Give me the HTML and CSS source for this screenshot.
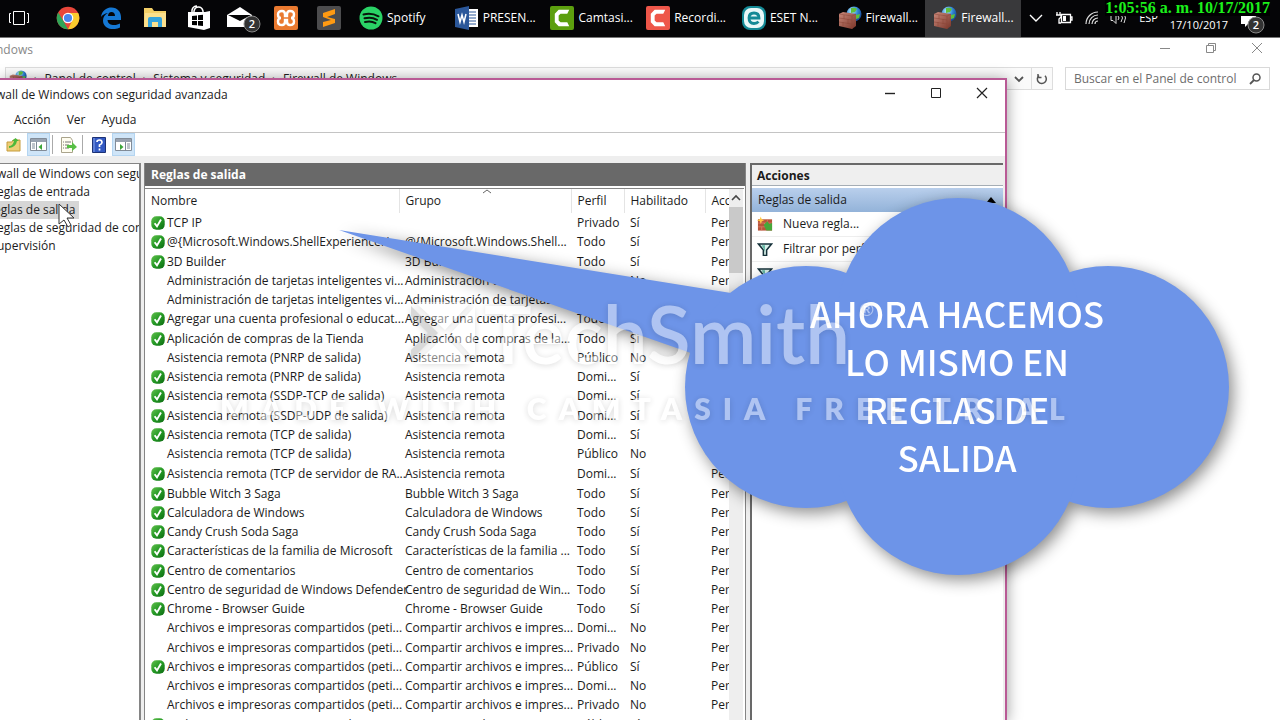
FILE: index.html
```html
<!DOCTYPE html>
<html lang="es">
<head>
<meta charset="utf-8">
<title>Firewall de Windows con seguridad avanzada</title>
<link rel="stylesheet" href="styles.css">
</head>
<body>
<svg class="defs" aria-hidden="true">
  <defs>
    <radialGradient id="globe" cx=".35" cy=".3" r=".8"><stop offset="0" stop-color="#bdf0ff"/><stop offset=".5" stop-color="#2f86d6"/><stop offset="1" stop-color="#123a86"/></radialGradient>
    <linearGradient id="green" x1="0" y1="0" x2="1" y2="1"><stop offset="0" stop-color="#63c04d"/><stop offset=".5" stop-color="#259a25"/><stop offset="1" stop-color="#0c6a12"/></linearGradient>
    <linearGradient id="brick" x1="0" y1="0" x2="1" y2="1"><stop offset="0" stop-color="#c98a7c"/><stop offset="1" stop-color="#7a3428"/></linearGradient>
    <symbol id="ok" viewBox="0 0 14 14"><rect x=".3" y=".3" width="13.4" height="13.4" rx="5" fill="url(#green)"/><path d="M3.6 7.2 6 10.4 10 3.6" fill="none" stroke="#fff" stroke-width="1.9"/></symbol>
    <symbol id="fw" viewBox="0 0 24 24"><circle cx="16" cy="8" r="7.5" fill="url(#globe)"/><path d="M13 2q4-1 6 1l-2 3-4 1zM18 9l4-1-1 4-3 1z" fill="#5fbf3c"/><path d="M1 8l4-2 13 2v12l-4 3-13-3z" fill="url(#brick)"/><path d="M1 8l13 2v13M14 10l4-2M1 12l13 2M1 16l13 2M6 9v4M10 13v5M5 16v5" stroke="#8a4437" stroke-width=".5" fill="none"/></symbol>
    <symbol id="camt" viewBox="0 0 25 25"><rect width="25" height="25" rx="2" fill="currentColor"/><path d="M20 4H9L5 8v9l4 4h11l-2-4h-7l-2-2v-5l2-2h7z" fill="#fff"/></symbol>
    <symbol id="funnel" viewBox="0 0 14 12"><path d="M1 1h12L8.500 6.500v5h-3v-5z" fill="#d8f0ea" stroke="#16323a" stroke-width="1.4"/><path d="M4 2h3v6z" fill="#65b8a5"/></symbol>
  </defs>
</svg>

<div class="desktop">
  <header class="taskbar">
    <button class="taskview" aria-label="Vista de tareas"><svg width="22" height="18" viewBox="0 0 22 18" fill="none" stroke="#fff"><path d="M5.500 2.500h11v13h-11zM3 4.500H1.500v9H3M19 4.500h1.500v9H19"/></svg></button>
    <nav class="pinned">
      <button aria-label="Chrome"><svg width="24" height="24" viewBox="0 0 24 24"><circle cx="12" cy="12" r="11.300" fill="#e8463a"/><path d="M2.200 6.400 8 16l4 7.300A11.300 11.300 0 0 1 2.200 6.400z" fill="#2fa557"/><path d="M12 7h10.200A11.300 11.300 0 0 1 12 23.300L17 13z" fill="#fbcb2d"/><circle cx="12" cy="12" r="5.300" fill="#fff"/><circle cx="12" cy="12" r="4.100" fill="#4a86ee"/></svg></button>
      <button aria-label="Edge"><svg width="22" height="22" viewBox="0 0 22 22"><path d="M1 10C2 3 7 .5 11.500.5c6 0 9.500 4.500 9.500 9.500v3H7.500c.3 4 3.500 5 6.500 5 2.500 0 4.500-.8 6-1.600v4.200c-2 1-4.500 1.500-7 1.500C7 22.100 3 18.500 3 13.500 3 10 5 7.500 8 6 4.500 6.500 2.500 8 1 10zm7-1h7c0-2.500-1.400-4-3.500-4S8.200 6.500 8 9z" fill="#1578d4"/></svg></button>
      <button aria-label="Explorador de archivos"><svg width="24" height="22" viewBox="0 0 24 22"><path d="M1 1h8l2 3h12v16H1z" fill="#f3cf67"/><path d="M2 6h21v14H1z" fill="#fbe08d"/><path d="M5 20v-8q0-2 2-2h10q2 0 2 2v8h-4v-5H9v5z" fill="#35a4dd"/></svg></button>
      <button aria-label="Tienda"><svg width="24" height="26" viewBox="0 0 24 26"><path d="M7 8V6q1-4 4.500-4T16 6v2M5 8V5q1-4 5-4" fill="none" stroke="#fff" stroke-width="1.500"/><path d="M1 7h17l5-1v17l-6 2-16-3z" fill="#fff"/><path d="M5 11l5-.6v4.600H5zm6-.7 5-.5V15h-5zM5 16h5v4.300L5 20zm6 0h5v5l-5-.6z" fill="#000"/></svg></button>
      <button aria-label="Correo, 2 mensajes"><svg width="42" height="30" viewBox="-5 -3 42 30"><path d="M1 9 14 1l12 8v12H1z" fill="#fff"/><path d="M2 9h23l-11 6z" fill="#050505"/><circle cx="26" cy="18" r="8" fill="#333" stroke="#888"/><text x="26" y="22" class="badge">2</text></svg></button>
      <button aria-label="XAMPP"><svg width="24" height="24" viewBox="0 0 24 24"><rect width="24" height="24" rx="2" fill="#ea7a30"/><path d="M8 5Q4 5 4 8.500T7 12q-3 0-3 3.500T8 19q3 0 3-3.500V14h2v1.500q0 3.500 3 3.500 4 0 4-3.500T17 12q3 0 3-3.500T16 5q-3 0-3 3.500V10h-2V8.500Q11 5 8 5z" fill="none" stroke="#fff" stroke-width="2.400"/></svg></button>
      <button aria-label="Sublime Text"><svg width="24" height="24" viewBox="0 0 24 24"><rect width="24" height="24" rx="2" fill="#4c4c4e"/><path d="M6 7l12-4v5l-8 3 8 2v4l-12 4v-5l8-2-8-3z" fill="#ff9a12"/></svg></button>
    </nav>
    <nav class="running">
      <button><svg width="24" height="24" viewBox="0 0 24 24"><circle cx="12" cy="12" r="11.500" fill="#2ad366"/><path d="M4.500 8.500q8-2 15 1.800M5.500 12.300q7-1.800 12.500 1.500M6 16q6-1.500 10.500 1.200" fill="none" stroke="#08150c" stroke-width="2" stroke-linecap="round"/></svg>Spotify</button>
      <button><svg width="24" height="24" viewBox="0 0 24 24"><path d="M11 3h12v18H11z" fill="#fff"/><path d="M14 6h7M14 9h7M14 12h7M14 15h7M14 18h7" stroke="#2b579a"/><path d="M0 3 14 0v24L0 21z" fill="#2b579a"/><path d="M3 8l2 8 2-7 2 7 2-8" fill="none" stroke="#fff" stroke-width="1.500"/></svg>PRESEN...</button>
      <button><svg class="lime" width="24" height="24"><use href="#camt"/></svg>Camtasi...</button>
      <button><svg class="coral" width="24" height="24"><use href="#camt"/></svg>Recordi...</button>
      <button><svg width="24" height="24" viewBox="0 0 24 24"><rect width="24" height="24" rx="8" fill="#148a96"/><rect x="2" y="2" width="20" height="20" rx="7" fill="#e9f8f8"/><path d="M7 12h10q0-5-5-5t-5 5q0 5.500 5 5.500 3 0 4.500-1.800" fill="none" stroke="#148a96" stroke-width="2.800"/></svg>ESET N...</button>
      <button><svg width="24" height="24"><use href="#fw"/></svg>Firewall...</button>
      <button class="active"><svg width="24" height="24"><use href="#fw"/></svg>Firewall...</button>
    </nav>
    <div class="tray">
      <svg width="14" height="8" viewBox="0 0 14 8"><path d="M1 1l6 6 6-6" fill="none" stroke="#fff" stroke-width="1.400"/></svg>
      <svg width="18" height="14" viewBox="0 0 18 14"><path d="M6.500 3.500h9v8h-9zM16 6h1v3h-1M2 1v3M5 1v3M1 4h5v2L4 8v4h2" fill="none" stroke="#fff" stroke-width="1.300"/><path d="M8 5h3v5H8z" fill="#fff"/></svg>
      <svg width="14" height="14" viewBox="0 0 14 14"><path d="M1 13A12 12 0 0 1 13 1M4 13a9 9 0 0 1 9-9M7 13a6 6 0 0 1 6-6M10 13a3 3 0 0 1 3-3" fill="none" stroke="#ddd" stroke-width="1.200"/></svg>
      <svg width="17" height="14" viewBox="0 0 17 14"><path d="M1 4.500h2l3-3v11l-3-3H1zM8 5q2 2 0 4M11 3q3 4 0 8M14 2q3 5 0 10" fill="none" stroke="#ddd"/></svg>
      <span>ESP</span>
      <time class="date">17/10/2017</time>
      <svg class="notes" width="26" height="24" viewBox="0 0 26 24"><path d="M1 5h15v8H8l-3 3v-3H1z" fill="#fff"/><circle cx="16" cy="14" r="8" fill="#333" stroke="#888"/><text x="16" y="18" class="badge">2</text></svg>
    </div>
    <time class="overlay-clock">1:05:56 a. m. 10/17/2017</time>
  </header>

  <section class="panel-window">
    <div class="caption">
      <span>ndows</span>
      <div class="caption-buttons">
        <button aria-label="Minimizar"><svg width="12" height="12"><path d="M1 6.500h10" stroke="#888"/></svg></button>
        <button aria-label="Restaurar"><svg width="12" height="12" fill="none" stroke="#888"><path d="M1.500 3.500h7v7h-7zM3.500 3V1.500h7v7H9"/></svg></button>
        <button aria-label="Cerrar"><svg width="12" height="12"><path d="M1 1l10 10M11 1 1 11" stroke="#888"/></svg></button>
      </div>
    </div>
    <div class="address-row">
      <div class="address">
        <svg width="18" height="18"><use href="#fw"/></svg>
        <i>›</i><a href="#panel">Panel de control</a><i>›</i><a href="#sistema">Sistema y seguridad</a><i>›</i><a href="#firewall">Firewall de Windows</a>
        <button class="drop" aria-label="Ubicaciones anteriores"><svg width="10" height="8"><path d="M1 2l4 4 4-4" fill="none" stroke="#555" stroke-width="1.800"/></svg></button>
        <button class="reload" aria-label="Actualizar"><svg width="12" height="12" viewBox="0 0 12 12"><path d="M3 2.500A4.500 4.500 0 1 0 9 2.800M2 1v3.500h3.500" fill="none" stroke="#555" stroke-width="1.500"/></svg></button>
      </div>
      <label class="search"><input type="search" placeholder="Buscar en el Panel de control" aria-label="Buscar en el Panel de control"><svg width="12" height="12"><circle cx="7.500" cy="4.500" r="3.500" fill="none" stroke="#555" stroke-width="1.500"/><path d="M5 7 1 11" stroke="#555" stroke-width="1.800"/></svg></label>
    </div>
  </section>

  <main class="firewall-window">
    <div class="title">
      <span>wall de Windows con seguridad avanzada</span>
      <div class="title-buttons">
        <button aria-label="Minimizar"><svg width="12" height="12"><path d="M1 6.500h10" stroke="#222" stroke-width="1.400"/></svg></button>
        <button aria-label="Maximizar"><svg width="12" height="12"><path d="M1.500 1.500h9v9h-9z" fill="none" stroke="#222"/></svg></button>
        <button aria-label="Cerrar"><svg width="12" height="12"><path d="M1 1l10 10M11 1 1 11" stroke="#222" stroke-width="1.200"/></svg></button>
      </div>
    </div>
    <nav class="menu"><button>Acción</button><button>Ver</button><button>Ayuda</button></nav>
    <div class="toolbar">
      <button aria-label="Subir"><svg width="16" height="16" viewBox="0 0 16 16"><path d="M1 5h5l1-2h7v11H1z" fill="#edcf77" stroke="#c69b3c"/><path d="M3 9q4 0 5-5H6l3.500-3L13 4h-2q-1 6-8 7z" fill="#4eb83c"/></svg></button>
      <button class="on" aria-label="Mostrar árbol"><svg width="17" height="15" viewBox="0 0 17 15"><path d="M.5 1.500h16v12H.5z" fill="#fff" stroke="#828c98"/><path d="M1 2h15v3H1z" fill="#98a2b0"/><path d="M2 7h3M2 9h3M2 11h3M6.500 5v9" stroke="#7d8896"/><path d="M12 7v6L8.500 10z" fill="#3da63a"/></svg></button>
      <hr>
      <button aria-label="Exportar lista"><svg width="17" height="16" viewBox="0 0 17 16"><path d="M1.500.5h9l2 3v12h-11z" fill="#fffdf0" stroke="#aaa48c"/><path d="M3 5h1M5 5h6M3 8h1M5 8h4M3 11h1M5 11h4" stroke="#777"/><path d="M7 8h5V5l5 5-5 4v-3H7z" fill="#58bf45"/></svg></button>
      <hr>
      <button aria-label="Ayuda"><svg width="14" height="16" viewBox="0 0 14 16"><path d="M.5.5h13v15H.5z" fill="#3359c2" stroke="#1c3276"/><path d="M2 1v14" stroke="#89a5ea"/><path d="M5 5q0-2 2.500-2T10 5.500Q10 7 7.500 8v2M7.500 11.500v2" fill="none" stroke="#fff" stroke-width="1.700"/></svg></button>
      <button class="on" aria-label="Mostrar acciones"><svg width="17" height="15" viewBox="0 0 17 15"><path d="M.5 1.500h16v12H.5z" fill="#fff" stroke="#828c98"/><path d="M1 2h15v3H1z" fill="#98a2b0"/><path d="M12 7h3M12 9h3M12 11h3M10.500 5v9" stroke="#7d8896"/><path d="M5 7v6l3.500-3z" fill="#3da63a"/></svg></button>
    </div>
    <div class="content">
      <ul class="tree">
        <li>wall de Windows con seguridad</li>
        <li>eglas de entrada</li>
        <li><span class="selected">eglas de salida</span></li>
        <li>eglas de seguridad de conexión</li>
        <li>upervisión</li>
      </ul>
      <section class="rules">
        <h2>Reglas de salida</h2>
        <div class="list">
          <div class="viewport">
          <table>
            <colgroup><col class="c-name"><col class="c-group"><col class="c-profile"><col class="c-enabled"><col class="c-action"></colgroup>
            <thead><tr><th>Nombre</th><th class="sorted">Grupo<svg width="10" height="5"><path d="M1 4l4-3 4 3" fill="none" stroke="#666"/></svg></th><th>Perfil</th><th>Habilitado</th><th>Acción</th></tr></thead>
            <tbody>
              <tr><td><svg><use href="#ok"/></svg>TCP IP</td><td></td><td>Privado</td><td>Sí</td><td>Permitir</td></tr>
              <tr><td><svg><use href="#ok"/></svg>@{Microsoft.Windows.ShellExperienceH...</td><td>@{Microsoft.Windows.Shell...</td><td>Todo</td><td>Sí</td><td>Permitir</td></tr>
              <tr><td><svg><use href="#ok"/></svg>3D Builder</td><td>3D Builder</td><td>Todo</td><td>Sí</td><td>Permitir</td></tr>
              <tr><td><svg></svg>Administración de tarjetas inteligentes vi...</td><td>Administración de tarjetas...</td><td>Domi...</td><td>No</td><td>Permitir</td></tr>
              <tr><td><svg></svg>Administración de tarjetas inteligentes vi...</td><td>Administración de tarjetas...</td><td>Privado</td><td>No</td><td>Permitir</td></tr>
              <tr><td><svg><use href="#ok"/></svg>Agregar una cuenta profesional o educat...</td><td>Agregar una cuenta profesi...</td><td>Todo</td><td>Sí</td><td>Permitir</td></tr>
              <tr><td><svg><use href="#ok"/></svg>Aplicación de compras de la Tienda</td><td>Aplicación de compras de la...</td><td>Todo</td><td>Sí</td><td>Permitir</td></tr>
              <tr><td><svg></svg>Asistencia remota (PNRP de salida)</td><td>Asistencia remota</td><td>Público</td><td>No</td><td>Permitir</td></tr>
              <tr><td><svg><use href="#ok"/></svg>Asistencia remota (PNRP de salida)</td><td>Asistencia remota</td><td>Domi...</td><td>Sí</td><td>Permitir</td></tr>
              <tr><td><svg><use href="#ok"/></svg>Asistencia remota (SSDP-TCP de salida)</td><td>Asistencia remota</td><td>Domi...</td><td>Sí</td><td>Permitir</td></tr>
              <tr><td><svg><use href="#ok"/></svg>Asistencia remota (SSDP-UDP de salida)</td><td>Asistencia remota</td><td>Domi...</td><td>Sí</td><td>Permitir</td></tr>
              <tr><td><svg><use href="#ok"/></svg>Asistencia remota (TCP de salida)</td><td>Asistencia remota</td><td>Domi...</td><td>Sí</td><td>Permitir</td></tr>
              <tr><td><svg></svg>Asistencia remota (TCP de salida)</td><td>Asistencia remota</td><td>Público</td><td>No</td><td>Permitir</td></tr>
              <tr><td><svg><use href="#ok"/></svg>Asistencia remota (TCP de servidor de RA...</td><td>Asistencia remota</td><td>Domi...</td><td>Sí</td><td>Permitir</td></tr>
              <tr><td><svg><use href="#ok"/></svg>Bubble Witch 3 Saga</td><td>Bubble Witch 3 Saga</td><td>Todo</td><td>Sí</td><td>Permitir</td></tr>
              <tr><td><svg><use href="#ok"/></svg>Calculadora de Windows</td><td>Calculadora de Windows</td><td>Todo</td><td>Sí</td><td>Permitir</td></tr>
              <tr><td><svg><use href="#ok"/></svg>Candy Crush Soda Saga</td><td>Candy Crush Soda Saga</td><td>Todo</td><td>Sí</td><td>Permitir</td></tr>
              <tr><td><svg><use href="#ok"/></svg>Características de la familia de Microsoft</td><td>Características de la familia ...</td><td>Todo</td><td>Sí</td><td>Permitir</td></tr>
              <tr><td><svg><use href="#ok"/></svg>Centro de comentarios</td><td>Centro de comentarios</td><td>Todo</td><td>Sí</td><td>Permitir</td></tr>
              <tr><td><svg><use href="#ok"/></svg>Centro de seguridad de Windows Defender</td><td>Centro de seguridad de Win...</td><td>Todo</td><td>Sí</td><td>Permitir</td></tr>
              <tr><td><svg><use href="#ok"/></svg>Chrome - Browser Guide</td><td>Chrome - Browser Guide</td><td>Todo</td><td>Sí</td><td>Permitir</td></tr>
              <tr><td><svg></svg>Archivos e impresoras compartidos (peti...</td><td>Compartir archivos e impres...</td><td>Domi...</td><td>No</td><td>Permitir</td></tr>
              <tr><td><svg></svg>Archivos e impresoras compartidos (peti...</td><td>Compartir archivos e impres...</td><td>Privado</td><td>No</td><td>Permitir</td></tr>
              <tr><td><svg><use href="#ok"/></svg>Archivos e impresoras compartidos (peti...</td><td>Compartir archivos e impres...</td><td>Público</td><td>Sí</td><td>Permitir</td></tr>
              <tr><td><svg></svg>Archivos e impresoras compartidos (peti...</td><td>Compartir archivos e impres...</td><td>Domi...</td><td>No</td><td>Permitir</td></tr>
              <tr><td><svg></svg>Archivos e impresoras compartidos (peti...</td><td>Compartir archivos e impres...</td><td>Privado</td><td>No</td><td>Permitir</td></tr>
              <tr><td><svg><use href="#ok"/></svg>Archivos e impresoras compartidos (peti...</td><td>Compartir archivos e impres...</td><td>Público</td><td>Sí</td><td>Permitir</td></tr>
            </tbody>
          </table>
          </div>
          <div class="scrollbar"><svg width="10" height="7"><path d="M1 6l4-4 4 4" fill="none" stroke="#444" stroke-width="1.600"/></svg><div class="thumb"></div></div>
        </div>
      </section>
      <aside class="actions">
        <h2>Acciones</h2>
        <h3>Reglas de salida<svg width="10" height="6"><path d="M0 6l5-6 5 6z"/></svg></h3>
        <button><svg width="16" height="16" viewBox="0 0 17 16"><path d="M1 3h15v12H1z" fill="#b8553b"/><path d="M1 7h15M1 11h15M5 3v4M11 3v4M8 7v4M5 11v4" stroke="#e08a70" stroke-width=".7"/><path d="M7 9l4-4 2 3 3-1v8H10z" fill="#46a83a"/><path d="M4 0l1 3 3 1-3 1-1 3-1-3-3-1 3-1z" fill="#ffc640"/></svg>Nueva regla...</button>
        <button><svg width="16" height="13"><use href="#funnel"/></svg>Filtrar por perfil</button>
        <button><svg width="16" height="13"><use href="#funnel"/></svg>Filtrar</button>
      </aside>
    </div>
  </main>

  <svg class="pointer" width="18" height="26" viewBox="0 0 18 26"><path d="M1 1v20l5-4 4 7 3-2-4-7h7z" fill="#fff" stroke="#333"/></svg>

  <figure class="callout">
    <svg width="900" height="400" viewBox="335 195 900 400" fill="#6d94e8"><path d="M339 230 731 293 820 330 760 380 688 352z"/><circle cx="806" cy="387" r="121"/><circle cx="1108" cy="387" r="121"/><circle cx="958" cy="319" r="121"/><circle cx="958" cy="454" r="121"/><rect x="806" y="300" width="302" height="174"/></svg>
    <figcaption>AHORA HACEMOS<br>LO MISMO EN<br>REGLAS DE<br>SALIDA</figcaption>
  </figure>

  <div class="watermark">
    <div class="brand"><svg width="64" height="62" viewBox="0 0 64 62"><path d="M4 0h56L34 28zM64 4v54L40 31zM4 62h56L34 34z" fill="#fff"/><path d="M0 4l27 27L0 58V48l17-17L0 14z" fill="#aaa"/></svg><span>TechSmith</span><sup>®</sup></div>
    <p>MADE WITH CAMTASIA FREE TRIAL</p>
  </div>
</div>
</body>
</html>
```
FILE: styles.css
```css
* { box-sizing: border-box; }
body { margin: 0; font: 12px/18px "Open Sans", "Noto Sans", sans-serif; color: #1b1b1b; background: #fff; }
button { font: inherit; color: inherit; background: none; border: 0; padding: 0; white-space: nowrap; }
h2, h3, ul, p, figure { margin: 0; padding: 0; }
a { color: inherit; text-decoration: none; }
svg { flex: none; }
.defs { position: absolute; width: 0; height: 0; }
.desktop { position: relative; height: 100vh; min-height: 480px; overflow: hidden; }

.taskbar { position: relative; display: flex; height: 38px; background: #050507; color: #fff; border-bottom: 1px solid #777; }
.taskbar button { display: flex; align-items: center; justify-content: center; padding-bottom: 2px; }
.taskbar .taskview { width: 46px; padding-right: 8px; }
.taskview, .pinned, .running { flex: none; }
.pinned { display: flex; width: 305px; }
.pinned button { flex: 1; min-width: 0; }
.running { display: flex; width: 670px; }
.running button { flex: 1; justify-content: flex-start; gap: 4px; padding-left: 8px; overflow: hidden; }
.running .active { background: #39393b; }
.lime { color: #5c9f0e; }
.coral { color: #ee5649; }
.badge { font-size: 11px; fill: #fff; text-anchor: middle; font-weight: 600; }
.tray { display: flex; flex: 1; align-items: center; justify-content: space-between; padding: 0 14px 2px 8px; font-size: 11px; }
.date { align-self: flex-end; line-height: 20px; }
.notes { margin-top: 10px; }
.overlay-clock { position: absolute; top: 0; right: 10px; background: #000; color: #1bf01b; font: bold 16px/16px "Liberation Serif", serif; height: 16px; }

.panel-window { color: #888; }
.caption { display: flex; justify-content: space-between; height: 29px; padding: 3px 17px 0 0; text-indent: -4px; }
.caption-buttons { display: flex; gap: 34px; padding-bottom: 8px; text-indent: 0; }
.address-row { display: flex; gap: 12px; padding: 0 10px 0 5px; }
.address { display: flex; flex: 1; align-items: center; gap: 7px; height: 23px; padding-left: 3px; border: 1px solid #ddd; background: #fafafa; color: #222; }
.address i { font-style: normal; color: #666; }
.address .drop { margin-left: auto; }
.address .reload { display: flex; align-items: center; height: 21px; padding: 0 4px; border-left: 1px solid #ddd; }
.search { display: flex; align-items: center; width: 205px; height: 23px; padding: 0 8px; border: 1px solid #d9d9d9; }
.search input { flex: 1; min-width: 0; padding: 0; border: 0; outline: 0; font: inherit; background: none; }
.search input::placeholder { color: #6d6d6d; opacity: 1; }

.firewall-window { position: absolute; top: 78px; left: 0; right: 273px; bottom: 0; display: flex; flex-direction: column; background: #fff; border: solid #b95a95; border-width: 2px 2px 0 0; box-shadow: 0 2px 14px rgba(0,0,0,.4); }
.title { display: flex; flex: none; justify-content: space-between; height: 30px; line-height: 30px; padding-right: 17px; text-indent: -4px; }
.title-buttons { display: flex; gap: 34px; padding-bottom: 2px; text-indent: 0; }
.menu { display: flex; flex: none; align-items: center; gap: 16px; height: 23px; padding: 0 0 2px 14px; border-bottom: 1px solid #c4c4c4; }
.toolbar { display: flex; flex: none; align-items: center; height: 23px; padding-left: 2px; }
.toolbar button { display: flex; align-items: center; justify-content: center; width: 23px; height: 23px; }
.toolbar button + .on { margin-left: 2px; }
.toolbar .on { background: #cfe5f8; border: 1px solid #b4d5f1; }
.toolbar hr { width: 1px; height: 19px; margin: 0 4px 0 2px; border: 0; background: #aaa; }
.content { display: flex; flex: 1; min-height: 0; gap: 3px; padding: 7px 2px 0 0; background: #eee; }

.tree { flex: none; width: 141px; padding-top: 1px; overflow: hidden; list-style: none; white-space: nowrap; text-indent: -3px; background: #fff; border: solid #858585; border-width: 1px 2px 0 0; }
.tree li { height: 18px; }
.selected { display: inline-block; padding-right: 4px; background: #d6d6d6; }

.rules { display: flex; flex: 1; flex-direction: column; min-width: 0; border: solid #858585; border-width: 0 1px; background: #fff; }
.rules h2 { flex: none; height: 23px; padding-left: 6px; font-size: 12px; line-height: 23px; color: #fff; background: #696969; }
.list { display: flex; flex: 1; min-height: 0; margin: 2px 1px 0 0; padding-right: 1px; border-top: 1px solid #858585; }
.viewport { flex: 1; min-width: 0; overflow: hidden; }
table { width: 640px; table-layout: fixed; border-collapse: collapse; }
.c-name { width: 254px; }
.c-group { width: 172px; }
.c-profile { width: 53px; }
.c-enabled { width: 81px; }
.c-action { width: 80px; }
th { position: relative; height: 24px; padding: 0 0 0 6px; font-weight: 400; text-align: left; border-right: 1px solid #e4e4e4; }
.sorted svg { position: absolute; top: 0; left: 82px; }
td { height: 19px; padding: 0 0 0 6px; line-height: 19px; white-space: nowrap; }
tr:nth-child(4n+3) td, tr:nth-child(14) td { height: 20px; }
td svg { width: 14px; height: 14px; margin-right: 2px; vertical-align: -3px; }
.scrollbar { display: flex; flex-direction: column; align-items: center; flex: none; gap: 6px; width: 14px; padding-top: 5px; background: #eee; }
.thumb { width: 14px; height: 66px; background: #c9c9c9; }

.actions { flex: none; width: 253px; margin-left: 1px; border: solid #696969; border-width: 2px 0 0 2px; background: #fff; }
.actions h2 { height: 21px; padding-left: 5px; font-size: 12px; line-height: 21px; background: #efefef; border-bottom: 1px solid #a5adb5; }
.actions h3 { display: flex; align-items: center; justify-content: space-between; height: 24px; margin-top: 2px; padding: 0 7px 0 6px; font-size: 12px; font-weight: 400; background: linear-gradient(#b9cfec, #93b3d9); }
.actions button { display: flex; align-items: center; gap: 10px; width: 100%; height: 25px; padding-left: 5px; border-bottom: 1px solid #eee; }

.pointer { position: absolute; top: 203px; left: 58px; }
.callout { position: absolute; top: 195px; left: 335px; filter: drop-shadow(4px 5px 8px rgba(0,0,0,.45)); }
.callout svg { display: block; }
.callout figcaption { position: absolute; top: 94px; left: 350px; width: 544px; text-align: center; color: #fff; font: 500 35px/48px "Noto Sans CJK JP", sans-serif; }
.watermark { position: absolute; top: 285px; left: 220px; color: #fff; opacity: .45; white-space: nowrap; filter: drop-shadow(0 1px 3px rgba(0,0,0,.3)); }
.brand { display: flex; align-items: center; gap: 9px; height: 96px; padding-left: 191px; font: 600 80px/96px Lato, sans-serif; }
.brand sup { align-self: flex-start; font-size: 18px; line-height: 48px; }
.watermark p { font: 800 30px/54px Lato, sans-serif; letter-spacing: 12px; }
```
